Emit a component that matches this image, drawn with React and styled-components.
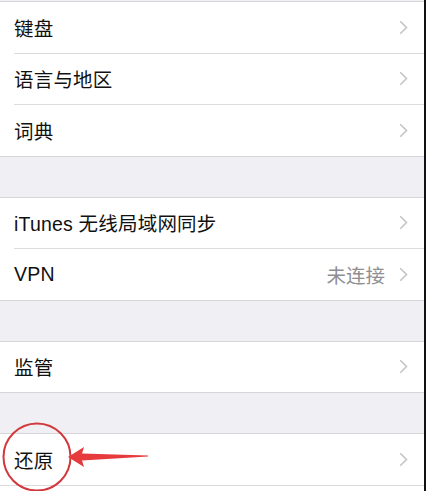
import React from 'react';
import styled, { createGlobalStyle } from 'styled-components';

const GlobalStyle = createGlobalStyle`
  html, body {
    margin: 0;
    padding: 0;
    background: #ffffff;
  }
  body {
    font-family: "Liberation Sans", "Noto Sans CJK SC", sans-serif;
    -webkit-font-smoothing: antialiased;
  }
`;

const Screen = styled.div`
  position: relative;
  display: flex;
  flex-direction: column;
  width: 424px;
  height: 490px;
  overflow: hidden;
  background: #efeff4;
  border-right: 2px solid #111;
  padding-top: 1px;
`;

const Section = styled.div`
  background: #ffffff;
  border-top: 1px solid #d6d6da;
  border-bottom: ${(p) => (p.$last ? 'none' : '1px solid #d6d6da')};
  margin-bottom: ${(p) => (p.$last ? '0' : '40px')};
  flex: ${(p) => (p.$last ? '1' : 'none')};
`;

const Row = styled.div`
  position: relative;
  display: flex;
  align-items: center;
  height: 50.5px;
  padding: 0 16px 0 14px;
  & + & {
    border-top: 1px solid #dcdce0;
  }
  & + &::before {
    content: '';
    position: absolute;
    left: 0;
    top: -1px;
    width: 14px;
    height: 1px;
    background: #ffffff;
  }
  ${Section}[data-last='true'] & {
    border-bottom: 1px solid #dcdce0;
  }
`;

const Label = styled.span`
  flex: 1;
  font-size: 19.5px;
  color: #111;
  letter-spacing: 0.2px;
`;

const Detail = styled.span`
  font-size: 19.5px;
  color: #8e8e93;
  margin-right: 14px;
`;

const Chevron = () => (
  <svg width="9" height="15" viewBox="0 0 9 15" aria-hidden="true">
    <path d="M1.2 1.2 L7.5 7.5 L1.2 13.8" fill="none" stroke="#c4c4c9" strokeWidth="1.6" />
  </svg>
);

const Annotation = styled.svg`
  position: absolute;
  left: 0;
  top: 418px;
  pointer-events: none;
`;

const sections = [
  [{ label: '键盘' }, { label: '语言与地区' }, { label: '词典' }],
  [{ label: 'iTunes 无线局域网同步' }, { label: 'VPN', detail: '未连接' }],
  [{ label: '监管' }],
  [{ label: '还原' }],
];

export default function App() {
  return (
    <>
      <GlobalStyle />
      <Screen>
        {sections.map((rows, i) => {
          const last = i === sections.length - 1;
          return (
            <Section key={i} $last={last} data-last={last ? 'true' : 'false'}>
              {rows.map((r) => (
                <Row key={r.label}>
                  <Label>{r.label}</Label>
                  {r.detail && <Detail>{r.detail}</Detail>}
                  <Chevron />
                </Row>
              ))}
            </Section>
          );
        })}
        <Annotation width="160" height="73" viewBox="0 0 160 73">
          <ellipse cx="37" cy="39" rx="33.5" ry="33.5" fill="none" stroke="#d2393d" strokeWidth="2" />
          <path d="M68 39 L84 29 L82 35.5 L148 37.5 L148 38.5 L82 42.5 L84 49 Z" fill="#e63a3c" />
        </Annotation>
      </Screen>
    </>
  );
}
